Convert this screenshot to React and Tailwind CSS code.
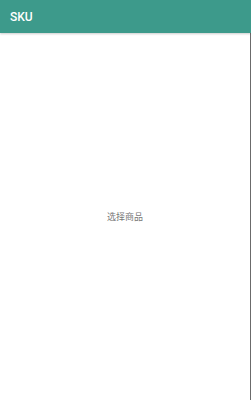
export default function App() {
  return (
    <div className="w-[251px] h-[400px] flex flex-col bg-white" style={{ fontFamily: "Roboto, 'Noto Sans CJK SC', sans-serif" }}>
      <div className="h-[33px] shrink-0 bg-[#3d9a8b] flex items-center px-[10px] shadow-[0_1px_2px_rgba(0,0,0,0.2)] z-10">
        <span className="text-white text-[12px] font-medium">SKU</span>
      </div>
      <div className="flex-1 flex items-center justify-center border-r border-[#6b6b6b] pt-[2px]">
        <span className="text-[9px] text-[#777777]">选择商品</span>
      </div>
    </div>
  );
}
